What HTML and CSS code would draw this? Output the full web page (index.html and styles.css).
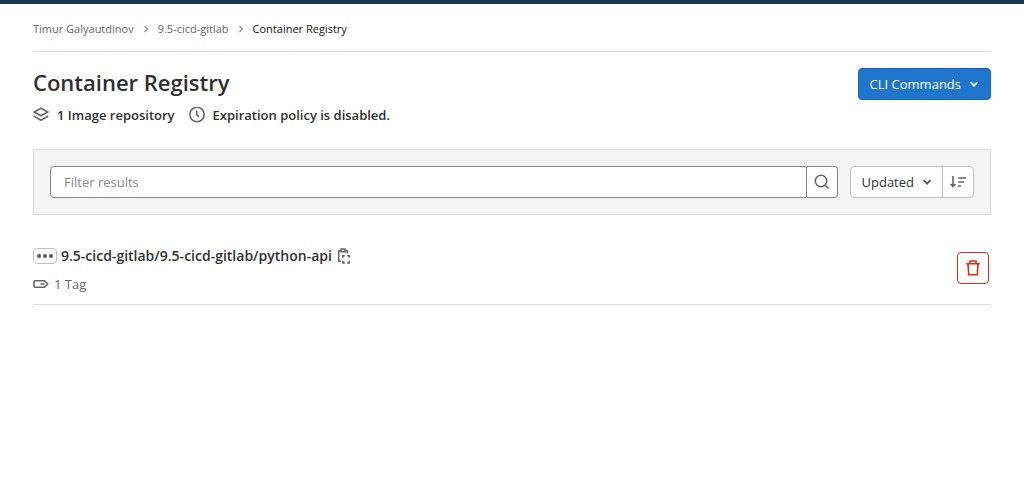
FILE: index.html
```html
<!DOCTYPE html>
<html lang="en">
<head>
<meta charset="utf-8">
<meta name="viewport" content="width=device-width, initial-scale=1">
<title>Container Registry</title>
<link rel="stylesheet" href="styles.css">
</head>
<body>
<div class="topbar"></div>
<div class="page">
  <nav class="breadcrumbs" aria-label="Breadcrumbs">
    <a href="#">Timur Galyautdinov</a>
    <svg class="crumb-sep" viewBox="0 0 8 8"><path d="M2.5 1 5.5 4 2.5 7"/></svg>
    <a href="#">9.5-cicd-gitlab</a>
    <svg class="crumb-sep" viewBox="0 0 8 8"><path d="M2.5 1 5.5 4 2.5 7"/></svg>
    <a href="#" class="current">Container Registry</a>
  </nav>
  <main>
    <header class="title-row">
      <div>
        <h1>Container Registry</h1>
        <div class="meta">
          <span class="meta-item">
            <svg class="icon" viewBox="0 0 16 16"><path d="M8 1.2 14.8 5 8 8.8 1.2 5Z"/><path d="M.8 9 8 13.2 15.2 9"/></svg>
            <span>1 Image repository</span>
          </span>
          <span class="meta-item">
            <svg class="icon" viewBox="0 0 16 16"><circle cx="8" cy="7.5" r="7.2"/><path d="M7.7 3.5V7.7L10 9.9"/></svg>
            <span>Expiration policy is disabled.</span>
          </span>
        </div>
      </div>
      <button type="button" class="btn btn-primary">
        <span>CLI Commands</span>
        <svg class="chevron" viewBox="0 0 10 10"><path d="M1.5 3.2 5 6.7 8.5 3.2"/></svg>
      </button>
    </header>
    <section class="filters">
      <form class="search">
        <input type="text" class="search-input" placeholder="Filter results" aria-label="Filter results">
        <button type="button" class="search-btn" aria-label="Search">
          <svg class="icon" viewBox="0 0 16 16"><circle cx="7" cy="7" r="5.7"/><path d="M11.2 11.2 14.5 14.5"/></svg>
        </button>
      </form>
      <div class="sort">
        <button type="button" class="sort-by">
          <span>Updated</span>
          <svg class="chevron" viewBox="0 0 10 10"><path d="M1.5 3.2 5 6.7 8.5 3.2"/></svg>
        </button>
        <button type="button" class="sort-dir" aria-label="Sort direction">
          <svg class="icon" viewBox="0 0 16 16"><path d="M3 2V12.5M.6 10 3 12.6 5.4 10M8 4H16M8 8H14M8 12H11"/></svg>
        </button>
      </div>
    </section>
    <article class="repo">
      <div class="repo-info">
        <div class="repo-name">
          <button type="button" class="ellipsis" aria-label="Show full path"><svg viewBox="0 0 16 4"><circle cx="2" cy="2" r="2"/><circle cx="8" cy="2" r="2"/><circle cx="14" cy="2" r="2"/></svg></button>
          <a href="#">9.5-cicd-gitlab/9.5-cicd-gitlab/python-api</a>
          <button type="button" class="copy" aria-label="Copy image path">
            <svg class="icon" viewBox="0 0 16 16"><path d="M5 13.2H2.7V2.8H4.5M9.5 2.8H11.3V5.8"/><path d="M5 1H9V3.8H5Z"/><path d="M6.8 9.8V7.8H8.8M11.2 7.8H13.2V9.8M13.2 12.8V14.9H11.2M8.8 14.9H6.8V12.8"/></svg>
          </button>
        </div>
        <div class="tags">
          <svg class="icon" viewBox="0 0 16 16"><path d="M2.2 4.7H11.5L14.7 8 11.5 11.3H2.2Q1 11.3 1 10V6Q1 4.7 2.2 4.7ZM7.5 8H11.5"/></svg>
          <span>1 Tag</span>
        </div>
      </div>
      <button type="button" class="delete" aria-label="Remove repository">
        <svg class="icon" viewBox="0 0 16 16"><path d="M1.2 3.8H14.8M5 3.8V1H11V3.8M3 3.8 3.7 14.8H12.3L13 3.8"/></svg>
      </button>
    </article>
  </main>
</div>
</body>
</html>
```
FILE: styles.css
```css
* { box-sizing: border-box; }
body {
  margin: 0;
  background: #fff;
  color: #303030;
  font: 13px/20px "Open Sans", "Noto Sans", sans-serif;
}
button, input { font: inherit; color: inherit; margin: 0; }
button { cursor: pointer; padding: 0; }
a { color: inherit; text-decoration: none; }
svg { display: block; flex: none; fill: none; stroke: currentColor; stroke-width: 1.6; }
.icon { width: 16px; height: 16px; color: #666; }
.chevron { width: 10px; height: 10px; stroke-width: 1.8; }
.topbar { height: 4px; background: #1b3653; }
.page { padding: 0 33px; }
.breadcrumbs {
  display: flex;
  align-items: center;
  gap: 8px;
  height: 48px;
  padding-top: 2px;
  border-bottom: 1px solid #dbdbdb;
  color: #666;
  font-size: 11px;
}
.breadcrumbs .current { color: #111; }
.crumb-sep { width: 8px; height: 8px; color: #888; stroke-width: 1.2; }
.title-row {
  display: flex;
  justify-content: space-between;
  align-items: flex-start;
  padding-top: 16px;
}
h1 { margin: 0; font-size: 22px; line-height: 28px; font-weight: 600; }
.meta { display: flex; gap: 14px; margin-top: 9px; font-weight: 600; }
.meta-item { display: flex; align-items: center; gap: 8px; }
.btn {
  display: flex;
  align-items: center;
  gap: 8px;
  height: 32px;
  padding: 0 11px;
  border-radius: 4px;
}
.btn-primary { background: #1f75cb; border: 1px solid #1068bf; color: #fff; }
.filters {
  display: flex;
  gap: 12px;
  margin-top: 24px;
  padding: 16px;
  background: #f4f4f4;
  border: 1px solid #dbdbdb;
}
.search { display: flex; flex: 1; }
.search-input {
  flex: 1;
  min-width: 0;
  height: 32px;
  padding: 0 13px;
  border: 1px solid #868686;
  border-radius: 4px 0 0 4px;
  background: #fff;
}
.search-input::placeholder { color: #868686; opacity: 1; }
.search-btn {
  display: grid;
  place-items: center;
  width: 31px;
  border: 1px solid #868686;
  border-left: 0;
  border-radius: 0 4px 4px 0;
  background: #fff;
}
.sort { display: flex; border: 1px solid #bfbfbf; border-radius: 4px; background: #fff; }
.sort button { display: flex; align-items: center; border: 0; background: none; }
.sort .sort-by { gap: 8px; padding: 0 10px 0 11px; }
.sort .sort-dir { padding: 0 7px; border-left: 1px solid #bfbfbf; }
.sort .chevron { color: #555; }
.repo {
  display: flex;
  justify-content: space-between;
  align-items: center;
  margin-top: 24px;
  padding: 5px 2px 12px 0;
  border-bottom: 1px solid #dbdbdb;
}
.repo-name {
  display: flex;
  align-items: center;
  gap: 4px;
  height: 24px;
  font-size: 14px;
  font-weight: 600;
}
.ellipsis {
  display: grid;
  place-items: center;
  width: 24px;
  height: 16px;
  border: 1px solid #bfbfbf;
  border-radius: 4px;
  background: #fff;
}
.ellipsis svg { width: 16px; height: 4px; fill: #555; stroke: none; }
.copy { border: 0; background: none; }
.tags {
  display: flex;
  align-items: center;
  gap: 5px;
  margin-top: 8px;
  color: #666;
  line-height: 16px;
}
.delete {
  display: grid;
  place-items: center;
  width: 32px;
  height: 32px;
  border: 1px solid #dd2b0e;
  border-radius: 4px;
  background: #fff;
}
.delete .icon { color: #dd2b0e; }
```
